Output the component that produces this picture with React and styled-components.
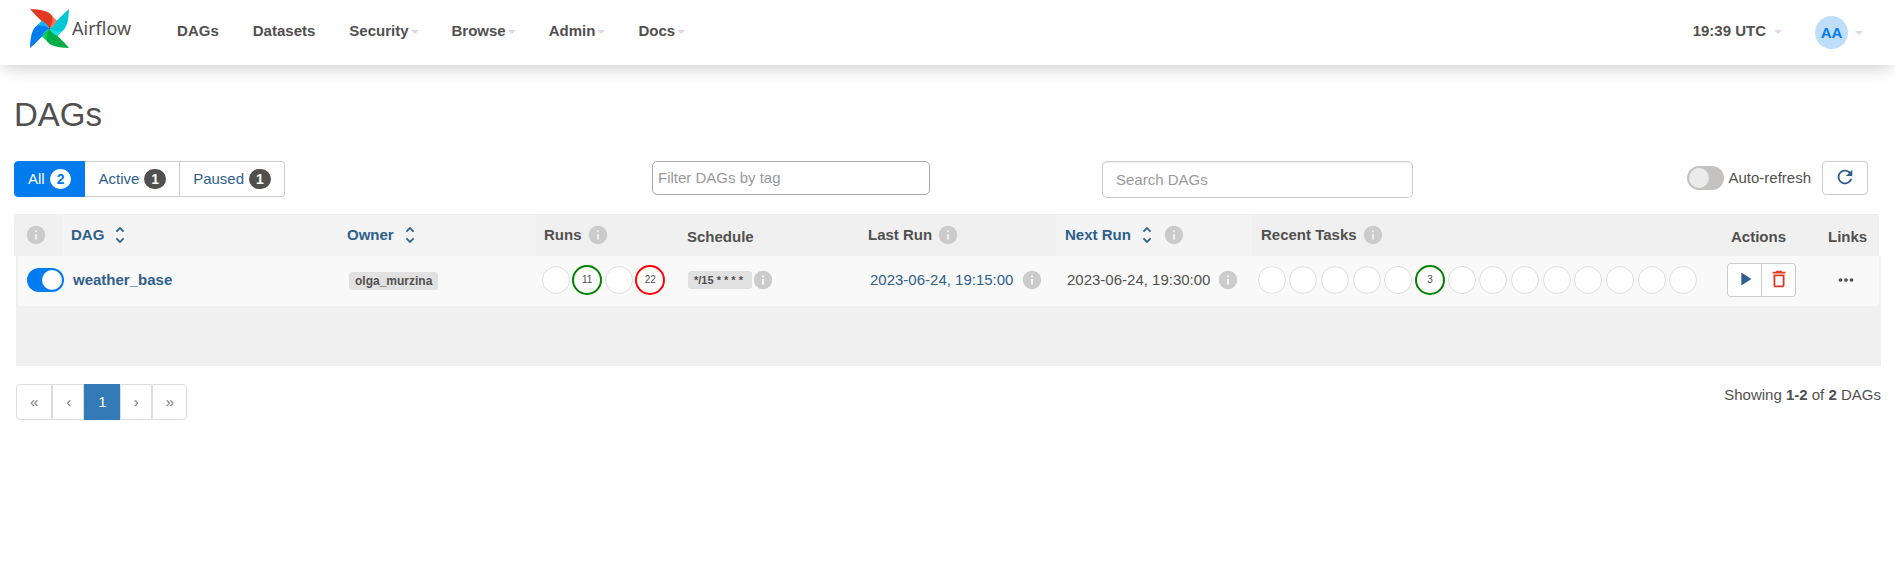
import React, { useState } from "react";
import styled, { createGlobalStyle } from "styled-components";
import {
  MdDeleteOutline,
  MdInfo,
  MdMoreHoriz,
  MdPlayArrow,
  MdRefresh,
  MdUnfoldMore,
} from "react-icons/md";

const color = {
  text: "#51504f",
  link: "#2e608b",
  blue: "#017cee",
  panel: "#f0f0f0",
  border: "#cccccc",
  danger: "#e43921",
};

const GlobalStyle = createGlobalStyle`
  * { box-sizing: border-box; }
  body {
    margin: 0;
    background: #ffffff;
    color: ${color.text};
    font: 15px/22px "Liberation Sans", Arial, sans-serif;
  }
  button, input { font: inherit; color: inherit; margin: 0; }
  button { cursor: pointer; }
  a { text-decoration: none; }
  svg { display: block; flex: none; }
`;

/* ---------- top bar ---------- */

const TopBar = styled.header`
  display: flex;
  align-items: center;
  height: 65px;
  padding: 0 32px 0 30px;
  background: #ffffff;
  box-shadow: 0 6px 16px -4px rgba(0, 0, 0, 0.22);
`;

const Brand = styled.a`
  display: flex;
  align-items: center;
  gap: 3px;
  margin-right: 29px;
  padding-bottom: 8px;
  color: ${color.text};
  font: 18px/39px "Noto Sans", sans-serif;
`;

const NavMenu = styled.nav`
  display: flex;
  flex: 1;
  padding-bottom: 4px;
`;

const navItem = `
  display: flex;
  align-items: center;
  padding: 0 17px;
  border: 0;
  background: none;
  font-weight: bold;
`;

const NavLink = styled.a`
  ${navItem}
  color: ${color.text};
`;

const NavButton = styled.button`
  ${navItem}
  padding-right: 16px;
  gap: ${(p) => p.$gap || 2}px;
`;

const Caret = styled.span`
  border: 4px solid transparent;
  border-top-color: #e4d4e7;
  border-bottom: 0;
  margin-top: 2px;
`;

const ClockButton = styled(NavButton)`
  padding-bottom: 4px;
`;

const UserButton = styled(NavButton)`
  padding-right: 0;
  ${Caret} { margin-top: 0; }
`;

const Avatar = styled.span`
  width: 33px;
  height: 33px;
  border-radius: 50%;
  background: #bfdefb;
  color: ${color.blue};
  line-height: 33px;
  text-align: center;
`;

/* ---------- page body ---------- */

const Page = styled.main`
  padding: 28px 14px;
`;

const Title = styled.h1`
  margin: 4px 0 28px;
  font-size: 33px;
  line-height: 36px;
  font-weight: normal;
`;

const Filters = styled.div`
  display: grid;
  grid-template-columns: 638fr 450fr 311fr 468fr;
  align-items: start;
  height: 37px;
  margin-bottom: 16px;
`;

const Segments = styled.div`
  display: flex;
`;

const Segment = styled.a`
  display: flex;
  align-items: center;
  gap: 5px;
  height: 36px;
  padding: 0 13px;
  border: 1px solid ${(p) => (p.$active ? color.blue : color.border)};
  background: ${(p) => (p.$active ? color.blue : "#ffffff")};
  color: ${(p) => (p.$active ? "#ffffff" : color.link)};
  & + & { border-left-width: 0; }
  &:first-child { border-radius: 4px 0 0 4px; }
  &:last-child { border-radius: 0 4px 4px 0; }
`;

const Count = styled.span`
  padding: 0 7px;
  border-radius: 10px;
  background: ${(p) => (p.$active ? "#ffffff" : color.text)};
  color: ${(p) => (p.$active ? color.blue : "#ffffff")};
  font-size: 14px;
  line-height: 20px;
  font-weight: bold;
`;

const TextBox = styled.input`
  width: 100%;
  height: 37px;
  padding: 0 13px;
  border: 1px solid ${color.border};
  border-radius: 5px;
  background: #ffffff;
  box-shadow: inset 0 1px 1px rgba(0, 0, 0, 0.07);
  &::placeholder { color: #999999; opacity: 1; }
`;

const TagBox = styled(TextBox)`
  max-width: 278px;
  height: 34px;
  padding: 0 6px 2px 5px;
  border-color: #aaaaaa;
  box-shadow: none;
`;

const RefreshTools = styled.div`
  display: flex;
  align-items: center;
  justify-content: flex-end;
  padding-right: 13px;
`;

const SwitchLabel = styled.label`
  display: flex;
  align-items: center;
  gap: 4px;
  margin-right: 11px;
  white-space: nowrap;
`;

const Switch = styled.input`
  appearance: none;
  position: relative;
  display: flex;
  flex: none;
  width: 37px;
  height: 24px;
  padding: 2px;
  border-radius: 12px;
  background: #c4c2c1;
  cursor: pointer;
  &::before {
    content: "";
    width: 20px;
    height: 20px;
    border-radius: 50%;
    background: #ebebeb;
  }
  &:checked {
    justify-content: flex-end;
    background: ${color.blue};
  }
  &:checked::before { background: #ffffff; }
`;

const IconButton = styled.button`
  display: flex;
  align-items: center;
  justify-content: center;
  width: ${(p) => p.$width}px;
  height: 34px;
  padding: 0 0 2px;
  border: 1px solid ${color.border};
  border-radius: 4px;
  background: #ffffff;
  color: ${(p) => (p.$danger ? color.danger : color.link)};
`;

const ButtonGroup = styled.div`
  display: flex;
  ${IconButton}:first-child { border-radius: 4px 0 0 4px; }
  ${IconButton}:last-child { border-radius: 0 4px 4px 0; border-left: 0; }
`;

/* ---------- table ---------- */

const DagTable = styled.table`
  width: 100%;
  table-layout: fixed;
  border-collapse: separate;
  border-spacing: 0;
`;

const Col = styled.col`
  width: ${(p) => (p.$width ? `${p.$width}px` : "auto")};
`;

const HeadCell = styled.th`
  height: 42px;
  padding: 8px 0 9px ${(p) => p.$pad || 9}px;
  border-top: 1px solid ${color.panel};
  background: ${(p) => (p.$sortable ? "#f4f4f4" : color.panel)};
  text-align: left;
  vertical-align: bottom;
  line-height: 20px;
  white-space: nowrap;
  &:first-child { border-top-left-radius: 4px; }
  &:last-child { border-right: 2px solid #ffffff; }
`;

const HeadLabel = styled.div`
  display: flex;
  align-items: center;
  gap: 5px;
  height: 24px;
`;

const SortLink = styled.a`
  display: flex;
  align-items: center;
  gap: 5px;
  color: ${color.link};
`;

const Info = styled(MdInfo)`
  color: #cbcbcb;
`;

const Cell = styled.td`
  height: 50px;
  padding: 0 0 2px ${(p) => p.$pad || 11}px;
  background: #f9f9f9;
  vertical-align: middle;
  white-space: nowrap;
  &:first-child {
    border-left: 2px solid #ffffff;
    box-shadow: inset 2px 0 0 ${color.panel};
  }
  &:last-child { border-right: 2px solid ${color.panel}; }
`;

const DagLink = styled.a`
  color: ${color.link};
  font-weight: bold;
`;

const RunLink = styled.a`
  color: ${color.link};
`;

const WithInfo = styled.div`
  display: flex;
  align-items: center;
  gap: ${(p) => p.$gap}px;
`;

const Tag = styled.a`
  display: inline-block;
  padding: 0 ${(p) => p.$right || 6}px 0 6px;
  border-radius: 3px;
  background: #e1e1e1;
  color: ${color.text};
  font-size: ${(p) => p.$size}px;
  line-height: 18px;
  font-weight: bold;
`;

const Circles = styled.div`
  display: grid;
  grid-template-columns: repeat(${(p) => p.$count}, 1fr);
  justify-items: center;
  align-items: center;
  width: ${(p) => p.$width}px;
`;

const Circle = styled.span`
  width: ${(p) => (p.$ring ? 30 : 28)}px;
  height: ${(p) => (p.$ring ? 30 : 28)}px;
  border: ${(p) => (p.$ring ? `2px solid ${p.$ring}` : "1px solid #dddddd")};
  border-radius: 50%;
  background: #ffffff;
  font-size: 10px;
  line-height: 26px;
  text-align: center;
`;

const MoreLinks = styled.button`
  display: flex;
  padding: 0;
  border: 0;
  background: none;
`;

const EmptyArea = styled.div`
  height: 60px;
  margin-left: 2px;
  background: ${color.panel};
`;

/* ---------- footer ---------- */

const TableFooter = styled.div`
  display: flex;
  justify-content: space-between;
  align-items: flex-start;
  padding: 18px 0 0 2px;
`;

const Pages = styled.nav`
  display: flex;
`;

const PageButton = styled.button`
  height: 36px;
  padding: 0 12px 0 13px;
  border: 1px solid ${(p) => (p.$current ? "#337ab7" : "#dddddd")};
  background: ${(p) => (p.$current ? "#337ab7" : "#ffffff")};
  color: ${(p) => (p.$current ? "#ffffff" : "#777777")};
  & + & { border-left-width: ${(p) => (p.$current ? 1 : 0)}px; }
  &:first-child { padding-right: 13px; border-radius: 4px 0 0 4px; }
  &:last-child { border-radius: 0 4px 4px 0; }
`;

const arms = [
  ["#e43921", "#ff7557", 0],
  ["#00c7d4", "#11e1ee", 90],
  ["#00ad46", "#04d659", 180],
  ["#017cee", "#0cb6ff", 270],
];

function Pinwheel() {
  return (
    <svg width="39" height="39" viewBox="0 0 118 118" aria-hidden="true">
      {arms.map(([dark, light, angle]) => (
        <g key={angle} transform={`rotate(${angle} 59 59)`}>
          <path fill={light} d="M64 18 L83 36 C76 45 68 54 59 59 Z" />
          <path
            fill={dark}
            d="M0 0 C32 1 58 6 67 21 C70 34 66 48 59 59 C54 50 45 42 35 36 C24 26 12 14 0 0 Z"
          />
        </g>
      ))}
      <circle cx="59" cy="59" r="2" fill={color.text} />
    </svg>
  );
}

function SortHeader({ children }) {
  return (
    <SortLink href="#">
      {children}
      <MdUnfoldMore size={22} />
    </SortLink>
  );
}

function CircleRow({ values, width }) {
  return (
    <Circles $count={values.length} $width={width}>
      {values.map((v, i) => (
        <Circle key={i} $ring={v && v.ring}>
          {v && v.count}
        </Circle>
      ))}
    </Circles>
  );
}

const runs = [null, { count: 11, ring: "green" }, null, { count: 22, ring: "red" }];
const tasks = Array.from({ length: 14 }, (_, i) =>
  i === 5 ? { count: 3, ring: "green" } : null
);
const columns = [48, null, 198, 143, 180, 197, 196, 470, 98, 61];

export default function App() {
  const [enabled, setEnabled] = useState(true);
  const [autoRefresh, setAutoRefresh] = useState(false);

  return (
    <>
      <GlobalStyle />
      <TopBar>
        <Brand href="#">
          <Pinwheel />
          Airflow
        </Brand>
        <NavMenu>
          <NavLink href="#">DAGs</NavLink>
          <NavLink href="#">Datasets</NavLink>
          {["Security", "Browse", "Admin", "Docs"].map((name) => (
            <NavButton key={name}>
              {name}
              <Caret />
            </NavButton>
          ))}
        </NavMenu>
        <ClockButton $gap={8}>
          19:39 UTC
          <Caret />
        </ClockButton>
        <UserButton $gap={7}>
          <Avatar>AA</Avatar>
          <Caret />
        </UserButton>
      </TopBar>

      <Page>
        <Title>DAGs</Title>

        <Filters>
          <Segments>
            <Segment href="#" $active>
              All <Count $active>2</Count>
            </Segment>
            <Segment href="#">
              Active <Count>1</Count>
            </Segment>
            <Segment href="#">
              Paused <Count>1</Count>
            </Segment>
          </Segments>
          <TagBox type="text" aria-label="Filter DAGs by tag" placeholder="Filter DAGs by tag" />
          <TextBox type="text" aria-label="Search DAGs" placeholder="Search DAGs" />
          <RefreshTools>
            <SwitchLabel>
              <Switch
                type="checkbox"
                checked={autoRefresh}
                onChange={(e) => setAutoRefresh(e.target.checked)}
              />
              Auto-refresh
            </SwitchLabel>
            <IconButton $width={46} aria-label="Refresh">
              <MdRefresh size={22} />
            </IconButton>
          </RefreshTools>
        </Filters>

        <DagTable>
          <colgroup>
            {columns.map((w, i) => (
              <Col key={i} $width={w} />
            ))}
          </colgroup>
          <thead>
            <tr>
              <HeadCell $pad={11}>
                <HeadLabel><Info size={22} /></HeadLabel>
              </HeadCell>
              <HeadCell $sortable>
                <HeadLabel><SortHeader>DAG</SortHeader></HeadLabel>
              </HeadCell>
              <HeadCell $sortable>
                <HeadLabel><SortHeader>Owner</SortHeader></HeadLabel>
              </HeadCell>
              <HeadCell $pad={8}>
                <HeadLabel>Runs <Info size={22} /></HeadLabel>
              </HeadCell>
              <HeadCell $pad={8}>Schedule</HeadCell>
              <HeadCell>
                <HeadLabel>Last Run <Info size={22} /></HeadLabel>
              </HeadCell>
              <HeadCell $sortable>
                <HeadLabel><SortHeader>Next Run</SortHeader> <Info size={22} /></HeadLabel>
              </HeadCell>
              <HeadCell>
                <HeadLabel>Recent Tasks <Info size={22} /></HeadLabel>
              </HeadCell>
              <HeadCell>Actions</HeadCell>
              <HeadCell $pad={8}>Links</HeadCell>
            </tr>
          </thead>
          <tbody>
            <tr>
              <Cell $pad={11}>
                <Switch
                  type="checkbox"
                  aria-label="Pause or unpause weather_base"
                  checked={enabled}
                  onChange={(e) => setEnabled(e.target.checked)}
                />
              </Cell>
              <Cell><DagLink href="#">weather_base</DagLink></Cell>
              <Cell><Tag href="#" $size={12}>olga_murzina</Tag></Cell>
              <Cell $pad={4}><CircleRow values={runs} width={126} /></Cell>
              <Cell $pad={9}>
                <WithInfo $gap={0}>
                  <Tag href="#" $size={11} $right={9}>*/15 * * * *</Tag>
                  <Info size={22} />
                </WithInfo>
              </Cell>
              <Cell>
                <WithInfo $gap={8}>
                  <RunLink href="#">2023-06-24, 19:15:00</RunLink>
                  <Info size={22} />
                </WithInfo>
              </Cell>
              <Cell>
                <WithInfo $gap={7}>
                  <time>2023-06-24, 19:30:00</time>
                  <Info size={22} />
                </WithInfo>
              </Cell>
              <Cell $pad={4}><CircleRow values={tasks} width={443} /></Cell>
              <Cell $pad={5}>
                <ButtonGroup>
                  <IconButton $width={35} aria-label="Trigger DAG"><MdPlayArrow size={22} /></IconButton>
                  <IconButton $width={34} $danger aria-label="Delete DAG"><MdDeleteOutline size={22} /></IconButton>
                </ButtonGroup>
              </Cell>
              <Cell $pad={15}>
                <MoreLinks aria-label="More links"><MdMoreHoriz size={22} /></MoreLinks>
              </Cell>
            </tr>
          </tbody>
        </DagTable>
        <EmptyArea />

        <TableFooter>
          <Pages aria-label="Pages">
            <PageButton>«</PageButton>
            <PageButton>‹</PageButton>
            <PageButton $current>1</PageButton>
            <PageButton>›</PageButton>
            <PageButton>»</PageButton>
          </Pages>
          <div>
            Showing <strong>1-2</strong> of <strong>2</strong> DAGs
          </div>
        </TableFooter>
      </Page>
    </>
  );
}
